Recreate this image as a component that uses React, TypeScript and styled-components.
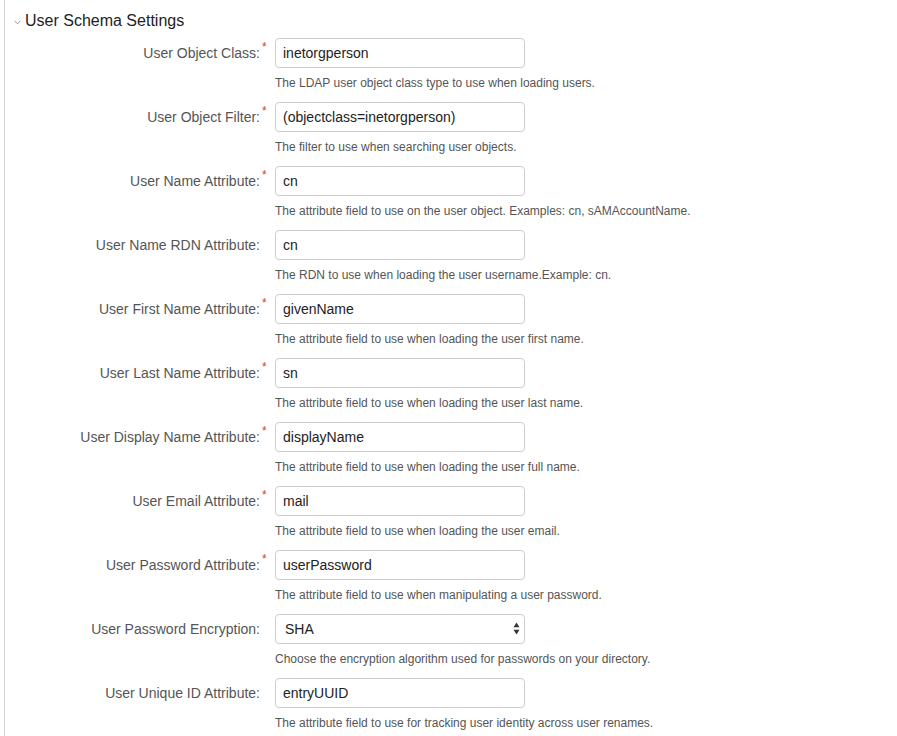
import React from 'react';
import styled, { createGlobalStyle } from 'styled-components';

/* ---------- Global ---------- */
const GlobalStyle = createGlobalStyle`
  html, body {
    margin: 0;
    padding: 0;
    background: #fff;
  }
  body {
    font-family: 'Liberation Sans', Arial, Helvetica, sans-serif;
    color: #333;
  }
`;

/* ---------- Styled Components ---------- */
const Panel = styled.div`
  margin-left: 4px;
  border-left: 1px solid #d5d5d5;
  min-height: 736px;
  box-sizing: border-box;
  padding-top: 10px;
`;

const Heading = styled.h3`
  display: flex;
  align-items: center;
  gap: 4px;
  margin: 0 0 6px 0;
  padding-left: 9px;
  font-size: 16px;
  font-weight: normal;
  line-height: 22px;
  color: #222;
`;

const Chevron = styled.svg`
  width: 7px;
  height: 5px;
  margin-top: 3px;
`;

const Form = styled.div`
  display: flex;
  flex-direction: column;
`;

const Row = styled.div`
  display: grid;
  grid-template-columns: 255px 250px;
  column-gap: 15px;
  row-gap: 7px;
  height: 64px;
  align-content: start;
`;

const Label = styled.label`
  position: relative;
  align-self: center;
  text-align: right;
  font-size: 14px;
  color: #555;
`;

const Required = styled.span`
  position: absolute;
  left: 100%;
  top: -5px;
  margin-left: 2px;
  color: #d33;
  font-size: 12px;
`;

const fieldCss = `
  box-sizing: border-box;
  width: 250px;
  height: 30px;
  border: 1px solid #ccc;
  border-radius: 4px;
  background: #fff;
  font-family: 'Liberation Sans', Arial, Helvetica, sans-serif;
  font-size: 14px;
  color: #222;
  outline: none;
`;

const Input = styled.input`
  ${fieldCss}
  padding: 0 7px;
`;

const SelectWrap = styled.div`
  position: relative;
  width: 250px;
`;

const Select = styled.select`
  ${fieldCss}
  appearance: none;
  -webkit-appearance: none;
  padding: 0 9px;
`;

const SelectArrows = styled.svg`
  position: absolute;
  right: 5px;
  top: 8px;
  width: 7px;
  height: 13px;
  pointer-events: none;
`;

const Help = styled.div`
  grid-column: 2 / span 1;
  width: 500px;
  font-size: 12px;
  color: #555;
  line-height: 16px;
`;

/* ---------- Data ---------- */
type Field = {
  label: string;
  value: string;
  help: string;
  required?: boolean;
  select?: boolean;
};

const fields: Field[] = [
  { label: 'User Object Class:', value: 'inetorgperson', help: 'The LDAP user object class type to use when loading users.', required: true },
  { label: 'User Object Filter:', value: '(objectclass=inetorgperson)', help: 'The filter to use when searching user objects.', required: true },
  { label: 'User Name Attribute:', value: 'cn', help: 'The attribute field to use on the user object. Examples: cn, sAMAccountName.', required: true },
  { label: 'User Name RDN Attribute:', value: 'cn', help: 'The RDN to use when loading the user username.Example: cn.' },
  { label: 'User First Name Attribute:', value: 'givenName', help: 'The attribute field to use when loading the user first name.', required: true },
  { label: 'User Last Name Attribute:', value: 'sn', help: 'The attribute field to use when loading the user last name.', required: true },
  { label: 'User Display Name Attribute:', value: 'displayName', help: 'The attribute field to use when loading the user full name.', required: true },
  { label: 'User Email Attribute:', value: 'mail', help: 'The attribute field to use when loading the user email.', required: true },
  { label: 'User Password Attribute:', value: 'userPassword', help: 'The attribute field to use when manipulating a user password.', required: true },
  { label: 'User Password Encryption:', value: 'SHA', help: 'Choose the encryption algorithm used for passwords on your directory.', select: true },
  { label: 'User Unique ID Attribute:', value: 'entryUUID', help: 'The attribute field to use for tracking user identity across user renames.' },
];

/* ---------- Main Component ---------- */
function App() {
  return (
    <>
      <GlobalStyle />
      <Panel>
        <Heading>
          <Chevron viewBox="0 0 7 5">
            <path d="M0.5 0.8 L3.5 3.8 L6.5 0.8" fill="none" stroke="#888" strokeWidth="0.9" />
          </Chevron>
          User Schema Settings
        </Heading>
        <Form>
          {fields.map((f) => (
            <Row key={f.label}>
              <Label>
                {f.label}
                {f.required && <Required>*</Required>}
              </Label>
              {f.select ? (
                <SelectWrap>
                  <Select defaultValue={f.value}>
                    <option>SHA</option>
                    <option>MD5</option>
                    <option>PLAINTEXT</option>
                  </Select>
                  <SelectArrows viewBox="0 0 7 13">
                    <path d="M3.5 0.5 L6.5 5.2 L0.5 5.2 Z" fill="#333" />
                    <path d="M0.5 7.8 L6.5 7.8 L3.5 12.5 Z" fill="#333" />
                  </SelectArrows>
                </SelectWrap>
              ) : (
                <Input defaultValue={f.value} />
              )}
              <Help>{f.help}</Help>
            </Row>
          ))}
        </Form>
      </Panel>
    </>
  );
}

export default App;
